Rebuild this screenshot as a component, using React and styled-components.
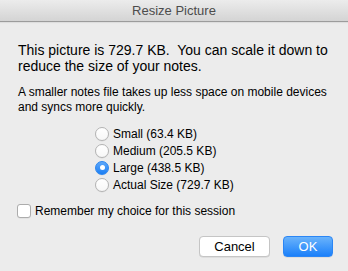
import React, { useState } from "react";
import styled, { createGlobalStyle } from "styled-components";

const Global = createGlobalStyle`
  html, body { margin: 0; padding: 0; background: #ececec; }
  body { font-family: "Liberation Sans", Arial, sans-serif; color: #000; }
`;

const Dialog = styled.div`
  width: 348px;
  height: 271px;
  background: #ececec;
  display: flex;
  flex-direction: column;
  overflow: hidden;
`;

const TitleBar = styled.div`
  height: 21px;
  border-bottom: 1px solid #9c9c9c;
  background: linear-gradient(#ececec, #d4d4d4);
  display: flex;
  align-items: center;
  justify-content: center;
  font-size: 13px;
  color: #4c4c4c;
  box-shadow: 0 1px 1px rgba(0, 0, 0, 0.06);
`;

const Body = styled.div`
  padding: 20px 15px 0 18px;
  display: flex;
  flex-direction: column;
`;

const Headline = styled.p`
  margin: 0;
  font-size: 14px;
  line-height: 16px;
  white-space: pre;
`;

const Note = styled.p`
  margin: 11px 0 0;
  font-size: 12px;
  line-height: 15px;
  white-space: pre;
`;

const RadioGroup = styled.div`
  margin: 10px 0 0 77px;
  display: flex;
  flex-direction: column;
`;

const OptionRow = styled.label`
  height: 17px;
  display: flex;
  align-items: center;
  gap: 4px;
  font-size: 12px;
`;

const RadioCircle = styled.span`
  width: 14px;
  height: 14px;
  box-sizing: border-box;
  border-radius: 50%;
  display: flex;
  align-items: center;
  justify-content: center;
  border: 1px solid ${(p) => (p.$checked ? "#2a85f0" : "#b3b3b3")};
  background: ${(p) =>
    p.$checked
      ? "linear-gradient(#5fa8fa, #1b7ff4)"
      : "linear-gradient(#ffffff, #f7f7f7)"};
  box-shadow: 0 0.5px 0.5px rgba(0, 0, 0, 0.08);
  &::after {
    content: "";
    display: ${(p) => (p.$checked ? "block" : "none")};
    width: 5px;
    height: 5px;
    border-radius: 50%;
    background: #fff;
  }
`;

const CheckRow = styled.label`
  margin: 9px 0 0 -1px;
  height: 17px;
  display: flex;
  align-items: center;
  gap: 4px;
  font-size: 12px;
`;

const CheckBox = styled.span`
  width: 14px;
  height: 14px;
  box-sizing: border-box;
  border-radius: 3px;
  border: 1px solid #acacac;
  background: #fff;
  box-shadow: 0 0.5px 0.5px rgba(0, 0, 0, 0.08);
`;

const ButtonRow = styled.div`
  margin-top: 17px;
  display: flex;
  justify-content: flex-end;
  gap: 13px;
`;

const Button = styled.button`
  height: 21px;
  width: ${(p) => p.$w}px;
  box-sizing: border-box;
  border-radius: 4px;
  font-family: "Liberation Sans", Arial, sans-serif;
  font-size: 13px;
  padding: 0;
  display: flex;
  align-items: center;
  justify-content: center;
  color: ${(p) => (p.$primary ? "#fff" : "#000")};
  border: 1px solid ${(p) => (p.$primary ? "#2b86f5" : "#c5c5c5")};
  background: ${(p) =>
    p.$primary ? "linear-gradient(#6ab3fb, #1b80fa)" : "#ffffff"};
  box-shadow: 0 0.5px 0.5px rgba(0, 0, 0, 0.12);
`;

const options = [
  { id: "small", label: "Small (63.4 KB)" },
  { id: "medium", label: "Medium (205.5 KB)" },
  { id: "large", label: "Large (438.5 KB)" },
  { id: "actual", label: "Actual Size (729.7 KB)" },
];

export default function App() {
  const [choice, setChoice] = useState("large");
  return (
    <>
      <Global />
      <Dialog>
        <TitleBar>Resize Picture</TitleBar>
        <Body>
          <Headline>
            {"This picture is 729.7 KB.  You can scale it down to\nreduce the size of your notes."}
          </Headline>
          <Note>
            {"A smaller notes file takes up less space on mobile devices\nand syncs more quickly."}
          </Note>
          <RadioGroup>
            {options.map((o) => (
              <OptionRow key={o.id} onClick={() => setChoice(o.id)}>
                <RadioCircle $checked={choice === o.id} />
                {o.label}
              </OptionRow>
            ))}
          </RadioGroup>
          <CheckRow>
            <CheckBox />
            Remember my choice for this session
          </CheckRow>
          <ButtonRow>
            <Button $w={71}>Cancel</Button>
            <Button $w={50} $primary>
              OK
            </Button>
          </ButtonRow>
        </Body>
      </Dialog>
    </>
  );
}
